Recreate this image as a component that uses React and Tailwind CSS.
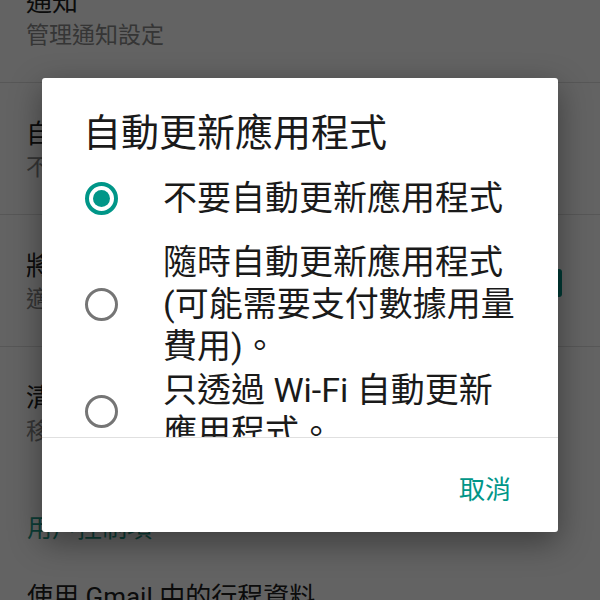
import React, { useState } from 'react';

const settings = [
  { title: '通知', summary: '管理通知設定' },
  { title: '自動更新應用程式', summary: '不要自動更新應用程式' },
  { title: '將圖示新增至主畫面', summary: '適用於新的應用程式', checked: true },
  { title: '清除本機搜尋記錄', summary: '移除您在這個裝置上搜尋過的內容', last: true },
];

const options = [
  '不要自動更新應用程式',
  '隨時自動更新應用程式 (可能需要支付數據用量費用)。',
  '只透過 Wi-Fi 自動更新應用程式。',
];

const Radio = ({ selected }) =>
  selected ? (
    <div className="w-[33px] h-[33px] rounded-full border-[4px] border-[#009688] flex items-center justify-center">
      <div className="w-[17px] h-[17px] rounded-full bg-[#009688]" />
    </div>
  ) : (
    <div className="w-[33px] h-[33px] rounded-full border-[3.5px] border-[#757575]" />
  );

const App = () => {
  const [choice, setChoice] = useState(0);

  return (
    <div className="relative w-[600px] h-[600px] overflow-hidden bg-white font-[Roboto,'Noto_Sans_CJK_TC',sans-serif]">
      {/* settings list behind the dialog */}
      <div className="-mt-[49px]">
        {settings.map((s) => (
          <div
            key={s.title}
            className={`flex items-center pl-[26px] pr-[38px] pt-[34px] pb-[29px] ${s.last ? '' : 'border-b border-[#e0e0e0]'}`}
          >
            <div className="flex-1 min-w-0">
              <div className="text-[26px] leading-[34px] text-[#212121] whitespace-nowrap">{s.title}</div>
              <div className="text-[23px] leading-[34px] text-[#8a8a8a] whitespace-nowrap">{s.summary}</div>
            </div>
            {s.checked && (
              <div className="w-[28px] h-[28px] rounded-[3px] bg-[#009688]" />
            )}
          </div>
        ))}
        <div className="pl-[27px] pt-[34px] text-[25px] leading-[34px] text-[#1f9d8c]">用戶控制項</div>
        <div className="pl-[27px] pt-[34px] text-[26px] leading-[34px] text-[#212121] whitespace-nowrap">
          使用 Gmail 中的行程資料
        </div>
      </div>

      {/* scrim */}
      <div className="absolute inset-0 bg-black/[0.61]" />

      {/* dialog */}
      <div className="absolute left-[42px] top-[78px] w-[516px] h-[454px] bg-white rounded-[3px] shadow-[0_10px_32px_rgba(0,0,0,0.4)] flex flex-col">
        <div className="pl-[41px] pt-[32px] text-[38px] leading-[46px] text-[#1a1a1a]">自動更新應用程式</div>
        <div className="flex-1 overflow-hidden">
          {options.map((label, i) => (
            <div
              key={i}
              onClick={() => setChoice(i)}
              className="flex items-center min-h-[84px] py-[1px] pl-[43px] cursor-pointer"
            >
              <div className="w-[78px] shrink-0">
                <Radio selected={choice === i} />
              </div>
              <div className="w-[358px] text-[34px] leading-[42px] text-[#1a1a1a]">{label}</div>
            </div>
          ))}
        </div>
        <div className="h-[95px] border-t border-[#e0e0e0] flex items-center justify-end pt-[10px] pr-[47px]">
          <button className="text-[26px] leading-[34px] text-[#009688]">取消</button>
        </div>
      </div>
    </div>
  );
};

export default App;
